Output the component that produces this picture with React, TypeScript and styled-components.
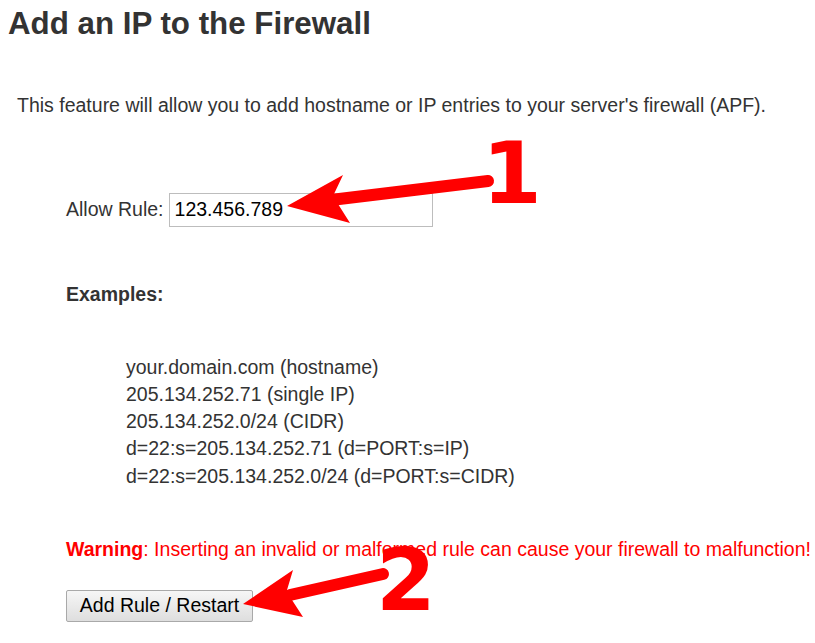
import styled, { createGlobalStyle } from 'styled-components';

const GlobalStyle = createGlobalStyle`
  html, body {
    margin: 0;
    padding: 0;
    background: #fff;
  }
  body {
    font-family: "Liberation Sans", Arial, sans-serif;
    color: #333;
  }
`;

const examples = [
    'your.domain.com (hostname)',
    '205.134.252.71 (single IP)',
    '205.134.252.0/24 (CIDR)',
    'd=22:s=205.134.252.71 (d=PORT:s=IP)',
    'd=22:s=205.134.252.0/24 (d=PORT:s=CIDR)',
];

const App = () => {
    return (
        <>
            <GlobalStyle />
            <Page>
                <Title>Add an IP to the Firewall</Title>
                <Intro>This feature will allow you to add hostname or IP entries to your server's firewall (APF).</Intro>
                <RuleRow>
                    <Label htmlFor="rule">Allow Rule:</Label>
                    <RuleInput id="rule" type="text" defaultValue="123.456.789" />
                </RuleRow>
                <ExamplesTitle>Examples:</ExamplesTitle>
                <ExampleList>
                    {examples.map(e => <li key={e}>{e}</li>)}
                </ExampleList>
                <Warning><strong>Warning</strong>: Inserting an invalid or malformed rule can cause your firewall to malfunction!</Warning>
                <SubmitButton type="button">Add Rule / Restart</SubmitButton>

                {/* annotation layer */}
                <Arrows width="815" height="643" viewBox="0 0 815 643">
                    <line x1="335" y1="199.5" x2="488" y2="181" stroke="#ff0000" strokeWidth="12" strokeLinecap="round" />
                    <polygon points="287,206 343,175 334,194 338,204 350,223" fill="#ff0000" />
                    <line x1="290" y1="595" x2="383" y2="574" stroke="#ff0000" strokeWidth="12" strokeLinecap="round" />
                    <polygon points="243,604 293,570 287,590 292,600 303,617" fill="#ff0000" />
                </Arrows>
                <Step $left={482} $top={130}>1</Step>
                <Step $left={376} $top={537}>2</Step>
            </Page>
        </>
    );
}

const Page = styled.div`
    position: relative;
    width: 815px;
    height: 643px;
    box-sizing: border-box;
    padding: 5px 8px 0;
    font-size: 19.5px;
    line-height: 27px;
    overflow: hidden;
`

const Title = styled.h1`
    margin: 0;
    font-size: 31.3px;
    line-height: 38px;
    font-weight: bold;
    color: #333;
`

const Intro = styled.p`
    margin: 48.5px 0 0 9px;
`

const RuleRow = styled.div`
    display: flex;
    align-items: center;
    gap: 5px;
    height: 33px;
    margin: 74.5px 0 0 58px;
`

const Label = styled.label`
    color: #333;
`

const RuleInput = styled.input`
    box-sizing: border-box;
    width: 264px;
    height: 34px;
    padding: 0 5px;
    border: 1px solid #bdbdbd;
    border-radius: 0;
    font-family: "Liberation Sans", Arial, sans-serif;
    font-size: 19.5px;
    color: #000;
    outline: none;
`

const ExamplesTitle = styled.div`
    margin: 55.4px 0 0 58px;
    font-weight: bold;
`

const ExampleList = styled.ul`
    list-style: none;
    margin: 45.3px 0 0 118px;
    padding: 0;
    li {
        line-height: 27.2px;
    }
`

const Warning = styled.p`
    margin: 46px 0 0 58px;
    color: #ff0000;
    white-space: nowrap;
    strong {
        font-weight: bold;
    }
`

const SubmitButton = styled.button`
    display: block;
    box-sizing: border-box;
    margin: 27px 0 0 58px;
    width: 187px;
    height: 32px;
    padding: 0 10px;
    border: 1px solid #a9a9a9;
    border-radius: 2px;
    background: linear-gradient(#f6f6f6, #dedede);
    font-family: "Liberation Sans", Arial, sans-serif;
    font-size: 19.5px;
    color: #000;
`

const Arrows = styled.svg`
    position: absolute;
    left: 0;
    top: 0;
    pointer-events: none;
`

const Step = styled.span<{ $left: number; $top: number }>`
    position: absolute;
    left: ${props => props.$left}px;
    top: ${props => props.$top}px;
    font-family: "DejaVu Sans", sans-serif;
    font-weight: bold;
    font-size: 86px;
    line-height: 86px;
    color: #ff0000;
    pointer-events: none;
`

export default App;
